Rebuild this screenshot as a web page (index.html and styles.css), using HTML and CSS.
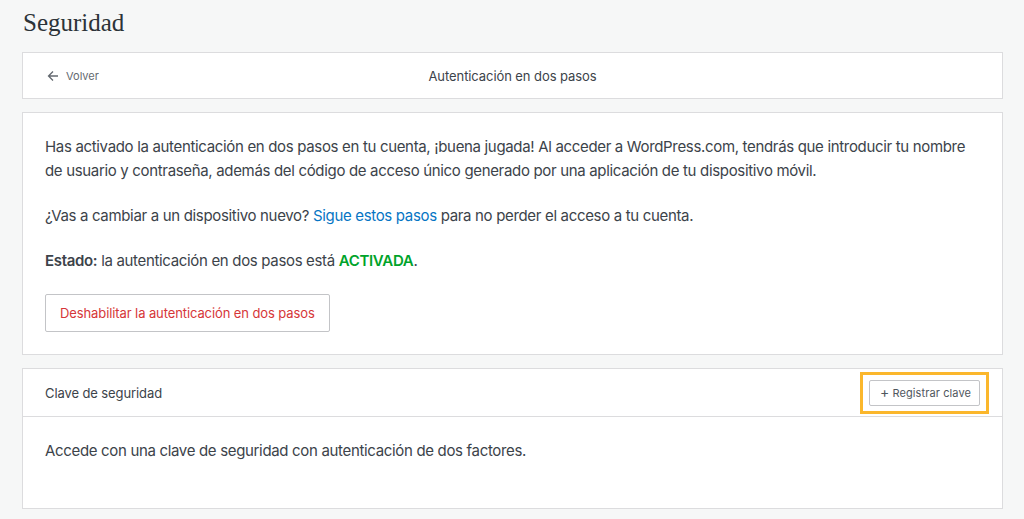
FILE: index.html
```html
<!DOCTYPE html>
<html lang="es">
<head>
<meta charset="utf-8">
<title>Seguridad</title>
<link rel="stylesheet" href="styles.css">
</head>
<body>
<main class="page">
  <h1 class="page-title">Seguridad</h1>

  <div class="card header-card">
    <a class="back" href="#">
      <svg class="back-icon" width="12" height="12" viewBox="0 0 12 12" aria-hidden="true">
        <path d="M11 6H1.5M6 1.5L1.5 6L6 10.5" fill="none" stroke="#646970" stroke-width="1.3"/>
      </svg>
      <span>Volver</span>
    </a>
    <div class="header-title">Autenticación en dos pasos</div>
  </div>

  <section class="card body-card">
    <p>Has activado la autenticación en dos pasos en tu cuenta, ¡buena jugada! Al acceder a WordPress.com, tendrás que introducir tu nombre de usuario y contraseña, además del código de acceso único generado por una aplicación de tu dispositivo móvil.</p>
    <p>¿Vas a cambiar a un dispositivo nuevo? <a class="link" href="#">Sigue estos pasos</a> para no perder el acceso a tu cuenta.</p>
    <p><strong>Estado:</strong> la autenticación en dos pasos está <strong class="active">ACTIVADA</strong>.</p>
    <button class="btn btn-danger" type="button">Deshabilitar la autenticación en dos pasos</button>
  </section>

  <section class="card key-card">
    <div class="key-header">
      <span class="key-title">Clave de seguridad</span>
      <span class="highlight">
        <button class="btn btn-small" type="button"><span class="plus">+</span> Registrar clave</button>
      </span>
    </div>
    <div class="key-body">
      <p>Accede con una clave de seguridad con autenticación de dos factores.</p>
    </div>
  </section>
</main>
</body>
</html>
```

FILE: styles.css
```css
* { box-sizing: border-box; }
html, body {
  margin: 0;
  padding: 0;
  background: #f6f7f7;
}
body {
  font-family: Inter, "Liberation Sans", Arial, sans-serif;
  color: #3c434a;
}
.page {
  padding: 0 21px 0 22px;
}
.page-title {
  margin: 0;
  padding: 9px 0 0 1px;
  height: 52px;
  font-family: "Liberation Serif", "Times New Roman", serif;
  font-weight: 400;
  font-size: 25px;
  line-height: 28px;
  color: #2c3338;
}
.card {
  background: #fff;
  border: 1px solid #dcdcde;
  margin-bottom: 13px;
}
.header-card {
  display: flex;
  align-items: center;
  height: 47px;
  padding: 0 24px;
  position: relative;
}
.back {
  display: flex;
  align-items: center;
  gap: 7px;
  font-size: 11px;
  color: #646970;
  text-decoration: none;
}
.header-title {
  position: absolute;
  left: 0;
  right: 0;
  text-align: center;
  font-size: 13px;
  letter-spacing: -0.08px;
  color: #3c434a;
  pointer-events: none;
}
.body-card {
  padding: 22px 22px 22px 22px;
}
.body-card p {
  margin: 0 0 21px;
  font-size: 15px;
  line-height: 24px;
  letter-spacing: -0.33px;
}
.link { color: #0675c4; text-decoration: none; }
.active { color: #00a32a; }
strong { font-weight: 600; }
.btn {
  font-family: inherit;
  background: #fff;
  border: 1px solid #c3c4c7;
  border-radius: 2px;
  cursor: pointer;
}
.btn-danger {
  height: 38px;
  padding: 0 14px;
  font-size: 13px;
  letter-spacing: -0.1px;
  color: #d63638;
}
.key-header {
  display: flex;
  align-items: center;
  justify-content: space-between;
  height: 48px;
  padding: 0 13px 0 22px;
  border-bottom: 1px solid #dcdcde;
}
.key-title {
  font-size: 13px;
  letter-spacing: -0.1px;
  color: #3c434a;
}
.highlight {
  display: flex;
  padding: 5px 6px 5px 6px;
  border: 3px solid #fbb72c;
}
.btn-small {
  height: 26px;
  padding: 0 8px 0 10px;
  font-size: 11px;
  letter-spacing: 0.1px;
  color: #50575e;
}
.plus { font-size: 14px; line-height: 1; }
.key-body {
  height: 91px;
  padding: 22px 22px;
}
.key-body p {
  margin: 0;
  font-size: 15px;
  line-height: 24px;
  letter-spacing: -0.33px;
}
```
